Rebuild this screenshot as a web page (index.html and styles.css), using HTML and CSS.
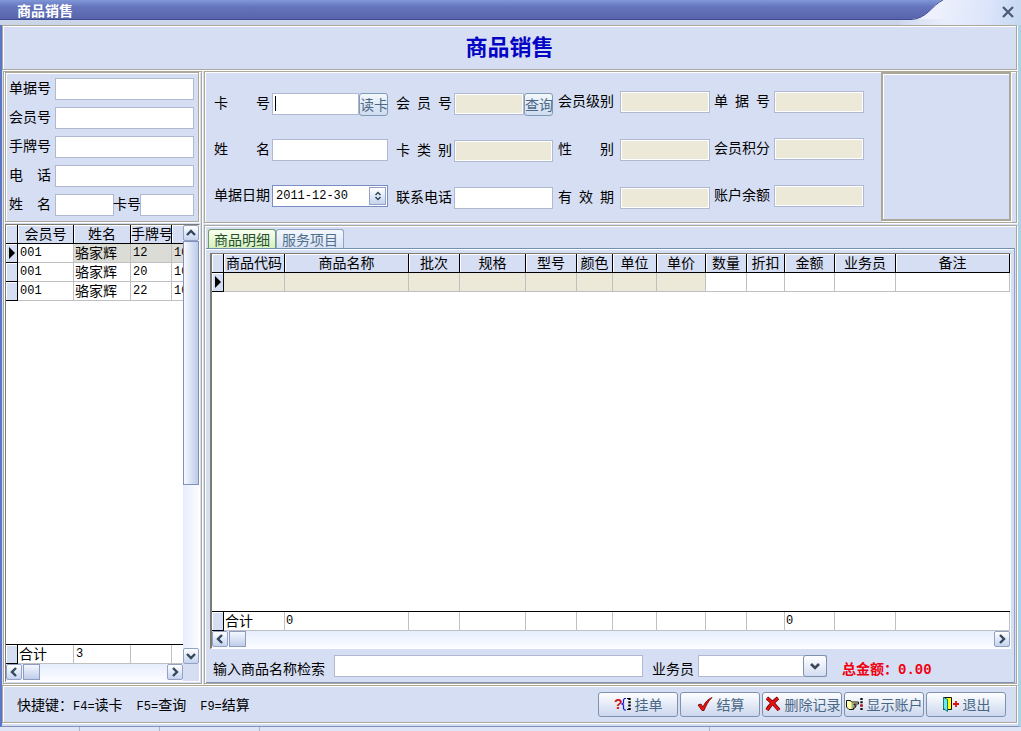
FILE: index.html
```
<!DOCTYPE html>
<html lang="zh-CN">
<head>
<meta charset="utf-8">
<title>商品销售</title>
<link rel="stylesheet" href="styles.css">
</head>
<body>
<svg class="defs" aria-hidden="true">
  <symbol id="arrow-left" viewBox="0 0 10 10"><path d="M7 1 3 5l4 4" fill="none" stroke="#33475f" stroke-width="2.4"/></symbol>
  <symbol id="arrow-right" viewBox="0 0 10 10"><path d="M3 1l4 4-4 4" fill="none" stroke="#33475f" stroke-width="2.4"/></symbol>
  <symbol id="arrow-up" viewBox="0 0 10 10"><path d="M1 7l4-4 4 4" fill="none" stroke="#33475f" stroke-width="2.4"/></symbol>
  <symbol id="arrow-down" viewBox="0 0 10 10"><path d="M1 3l4 4 4-4" fill="none" stroke="#33475f" stroke-width="2.4"/></symbol>
</svg>
<div class="window">
  <header class="titlebar">
    <div class="title-band">商品销售</div>
    <div class="title-corner">
      <svg class="corner-curve" viewBox="0 0 50 25" aria-hidden="true">
        <defs>
          <linearGradient id="band" x1="0" y1="0" x2="0" y2="1"><stop offset="0" stop-color="#7f97d8"/><stop offset=".35" stop-color="#6575bd"/><stop offset="1" stop-color="#5864ac"/></linearGradient>
          <linearGradient id="under" x1="0" y1="0" x2="1" y2="0"><stop offset="0" stop-color="#cfd9ee"/><stop offset="1" stop-color="#cfd9ee" stop-opacity="0"/></linearGradient>
        </defs>
        <path d="M0 19h50v6H0z" fill="url(#under)"/>
        <path d="M0 0h42C32 5 27 19 11 19H0z" fill="url(#band)"/>
        <path d="M0 19.5h11C27 19 32 5 43 0" fill="none" stroke="#3d4a92" stroke-width="1"/>
      </svg>
      <button class="close" aria-label="关闭"><svg width="12" height="12" viewBox="0 0 12 12"><path d="M1 1l10 10M11 1 1 11" stroke="#4c5a75" stroke-width="2.2"/></svg></button>
    </div>
  </header>
  <div class="body">
    <h1 class="banner etched">商品销售</h1>
    <main class="main">
      <aside class="side etched">
        <form class="lookup etched">
          <div class="line"><label for="q1">单据号</label><input id="q1" class="box"></div>
          <div class="line"><label for="q2">会员号</label><input id="q2" class="box"></div>
          <div class="line"><label for="q3">手牌号</label><input id="q3" class="box"></div>
          <div class="line"><label for="q4">电话</label><input id="q4" class="box"></div>
          <div class="line"><label for="q5">姓名</label><input id="q5" class="box name"><label class="short" for="q6">卡号</label><input id="q6" class="box"></div>
        </form>
        <div class="grid side-grid">
          <div class="rows">
            <table class="members">
              <colgroup><col class="w12"><col class="w56"><col class="w57"><col class="w41"><col class="w60"></colgroup>
              <thead><tr><th></th><th>会员号</th><th>姓名</th><th>手牌号</th><th></th></tr></thead>
              <tbody>
                <tr class="current"><th><i class="marker"></i></th><td class="plain num">001</td><td>骆家辉</td><td class="num">12</td><td class="num">10</td></tr>
                <tr><th></th><td class="num">001</td><td>骆家辉</td><td class="num">20</td><td class="num">10</td></tr>
                <tr><th></th><td class="num">001</td><td>骆家辉</td><td class="num">22</td><td class="num">10</td></tr>
              </tbody>
            </table>
          </div>
          <div class="totals">
            <table class="members">
              <colgroup><col class="w12"><col class="w56"><col class="w57"><col class="w41"><col class="w60"></colgroup>
              <tbody><tr><th></th><td>合计</td><td class="num">3</td><td></td><td></td></tr></tbody>
            </table>
          </div>
          <div class="vscroll">
            <button class="sb" aria-label="向上"><svg width="10" height="10"><use href="#arrow-up"/></svg></button>
            <div class="vtrack"><div class="vthumb"></div></div>
            <button class="sb" aria-label="向下"><svg width="10" height="10"><use href="#arrow-down"/></svg></button>
          </div>
          <div class="hscroll">
            <button class="sb" aria-label="向左"><svg width="10" height="10"><use href="#arrow-left"/></svg></button>
            <div class="hthumb"></div>
            <button class="sb end" aria-label="向右"><svg width="10" height="10"><use href="#arrow-right"/></svg></button>
          </div>
        </div>
      </aside>
      <section class="content">
        <form class="info etched">
          <div class="fields f1">
            <div class="line"><label for="a1">卡号</label><input id="a1" class="box caret"><button type="button" class="mini">读卡</button></div>
            <div class="line"><label for="a2">姓名</label><input id="a2" class="box"></div>
            <div class="line"><label for="a3">单据日期</label><div class="date"><input id="a3" value="2011-12-30"><button type="button" class="spin" aria-label="调整日期"><svg width="8" height="10" viewBox="0 0 8 10"><path d="M1.5 4 4 1.5 6.5 4M1.5 6 4 8.5 6.5 6" fill="none" stroke="#33475f" stroke-width="1.5"/></svg></button></div></div>
          </div>
          <div class="fields f2">
            <div class="line"><label for="b1">会员号</label><input id="b1" class="box off" readonly><button type="button" class="mini">查询</button></div>
            <div class="line"><label for="b2">卡类别</label><input id="b2" class="box off" readonly></div>
            <div class="line"><label for="b3">联系电话</label><input id="b3" class="box"></div>
          </div>
          <div class="fields f3">
            <div class="line"><label for="c1">会员级别</label><input id="c1" class="box off" readonly></div>
            <div class="line"><label for="c2">性别</label><input id="c2" class="box off" readonly></div>
            <div class="line"><label for="c3">有效期</label><input id="c3" class="box off" readonly></div>
          </div>
          <div class="fields f4">
            <div class="line"><label for="d1">单据号</label><input id="d1" class="box off" readonly></div>
            <div class="line"><label for="d2">会员积分</label><input id="d2" class="box off" readonly></div>
            <div class="line"><label for="d3">账户余额</label><input id="d3" class="box off" readonly></div>
          </div>
          <div class="photo"></div>
        </form>
        <section class="detail etched">
          <div class="tabs"><button class="tab active">商品明细</button><button class="tab">服务项目</button></div>
          <div class="sheet">
            <div class="grid">
              <div class="rows">
                <table class="goods">
                  <colgroup><col class="w12"><col class="w61"><col class="w124"><col class="w51"><col class="w66"><col class="w51"><col class="w36"><col class="w44"><col class="w49"><col class="w41"><col class="w38"><col class="w50"><col class="w61"><col></colgroup>
                  <thead><tr><th></th><th>商品代码</th><th>商品名称</th><th>批次</th><th>规格</th><th>型号</th><th>颜色</th><th>单位</th><th>单价</th><th>数量</th><th>折扣</th><th>金额</th><th>业务员</th><th>备注</th></tr></thead>
                  <tbody><tr><th><i class="marker"></i></th><td class="locked"></td><td class="locked"></td><td class="locked"></td><td class="locked"></td><td class="locked"></td><td class="locked"></td><td class="locked"></td><td class="locked"></td><td></td><td></td><td></td><td></td><td></td></tr></tbody>
                </table>
              </div>
              <div class="totals">
                <table class="goods">
                  <colgroup><col class="w12"><col class="w61"><col class="w124"><col class="w51"><col class="w66"><col class="w51"><col class="w36"><col class="w44"><col class="w49"><col class="w41"><col class="w38"><col class="w50"><col class="w61"><col></colgroup>
                  <tbody><tr><th></th><td>合计</td><td class="num">0</td><td></td><td></td><td></td><td></td><td></td><td></td><td></td><td></td><td class="num">0</td><td></td><td></td></tr></tbody>
                </table>
              </div>
              <div class="hscroll">
                <button class="sb" aria-label="向左"><svg width="10" height="10"><use href="#arrow-left"/></svg></button>
                <div class="hthumb"></div>
                <button class="sb end" aria-label="向右"><svg width="10" height="10"><use href="#arrow-right"/></svg></button>
              </div>
            </div>
            <div class="search">
              <label for="s1">输入商品名称检索</label><input id="s1" class="box find">
              <label for="s2">业务员</label>
              <div class="combo"><select id="s2" class="box"><option></option></select><span class="drop"><svg width="10" height="10" viewBox="0 0 10 10"><path d="M1 3l4 4 4-4" fill="none" stroke="#3d4658" stroke-width="2.6"/></svg></span></div>
              <strong class="sum">总金额：<span>0.00</span></strong>
            </div>
          </div>
        </section>
      </section>
    </main>
    <footer class="footer etched">
      <p class="keys"><span>快捷键：</span><span><b>F4=</b>读卡</span><span><b>F5=</b>查询</span><span><b>F9=</b>结算</span></p>
      <div class="actions">
        <button class="action"><svg width="18" height="16" viewBox="0 0 18 16"><text x="0" y="13" class="q">?</text><path d="M12 2.5h-1.5L9.5 4v3L8 8l1.5 1v3.5l1 1.5H12" fill="none" stroke="#1a1ad0" stroke-width="1.2"/><path d="M13 2.5h3M13 13.5h3" stroke="#000"/><path d="M15.5 2v12" stroke="#000" stroke-width="2.4" stroke-dasharray="2 1.3"/></svg>挂单</button>
        <button class="action"><svg width="18" height="16" viewBox="0 0 18 16"><path d="M2 9l3-1 2 3c2-5 5-8 9-9.5C12 5 10 10 8 14.5H6z" fill="#f01010" stroke="#600" stroke-width=".8"/></svg>结算</button>
        <button class="action"><svg width="18" height="16" viewBox="0 0 18 16"><path d="M3 2c4 3 8 7 12 12M14 2C10 5 6 9 3 14" fill="none" stroke="#500" stroke-width="3.6"/><path d="M3 2c4 3 8 7 12 12M14 2C10 5 6 9 3 14" fill="none" stroke="#e81010" stroke-width="2.4"/></svg>删除记录</button>
        <button class="action"><svg width="18" height="16" viewBox="0 0 18 16"><path d="M.5 4.5h4l1 1.500h7v2H8v1h2v1.500H9V12H7.500v1.500H3L.5 11z" fill="#ffffa8" stroke="#111"/><path d="M5.5 8h3M5.5 10h3.5M5.5 12H8" stroke="#333" stroke-width=".8"/><path d="M15.5 2v12" stroke="#111" stroke-width="2.4" stroke-dasharray="2 1.3"/><path d="M15.5 8.6v2" stroke="#e01010" stroke-width="2.4"/></svg>显示账户</button>
        <button class="action"><svg width="18" height="16" viewBox="0 0 18 16"><path d="M1.5 1.5h8v12h-8z" fill="#ff0" stroke="#111"/><path d="M1.500 1.500l4 2v12l-4-3z" fill="#6fe8e8" stroke="#157a7a"/><path d="M11 8h6M14 5v6" stroke="#e01010" stroke-width="1.8"/></svg>退出</button>
      </div>
    </footer>
  </div>
  <div class="status"><span></span><span></span><span class="c"></span><span class="d"></span></div>
</div>
</body>
</html>
```
FILE: styles.css
```
* { box-sizing: border-box; }
body {
  margin: 0;
  font: 14px/18px "Noto Sans CJK SC", sans-serif;
  color: #000;
  background: #d6def3;
}
button, input, select { font: inherit; color: inherit; margin: 0; padding: 0; border-radius: 0; }
button { cursor: pointer; white-space: nowrap; }
svg { display: block; flex: none; }
.defs { display: none; }

.window { min-height: 100vh; display: flex; flex-direction: column; }

/* Title bar */
.titlebar { display: flex; height: 25px; background: linear-gradient(#c3cdf0, #d2dbf0 60%, #c9d3e6); }
.title-band {
  flex: 1;
  height: 20px;
  padding: 1px 0 0 17px;
  color: #fff;
  font-weight: 700;
  background: linear-gradient(#7f97d8, #6575bd 35%, #5864ac);
  border-bottom: 1px solid #3d4a92;
}
.title-corner { display: flex; justify-content: space-between; width: 121px; background: linear-gradient(100deg, #eef1fd 30%, #dde5fb 70%, #c4d8f0); }
.corner-curve { width: 50px; height: 25px; }
.close { display: flex; align-items: center; justify-content: center; width: 27px; height: 23px; border: 0; background: none; }

.body {
  flex: 1;
  display: flex;
  flex-direction: column;
  gap: 1px;
  border-left: 2px solid #5a76c8;
  border-right: 3px solid #a9d3e8;
  padding-right: 1px;
  padding-bottom: 3px;
  background: #d6def3;
  border-bottom: 1px solid #8390b8;
}
.etched { border: 1px solid #aca899; box-shadow: inset 1px 1px #fff, 1px 1px #fff; }

.banner {
  margin: 0;
  padding: 4px 0 9px;
  font-size: 22px;
  line-height: 30px;
  text-align: center;
  color: #0404c4;
}

.main { flex: 1; display: flex; gap: 2px; }

/* Form pieces */
.line { display: flex; align-items: center; height: 22px; }
label { text-align: justify; text-align-last: justify; white-space: nowrap; }
.line label { padding-bottom: 4px; }
.box { flex: 1; min-width: 0; height: 22px; border: 1px solid #afb9d1; background: #fff; outline: 0; }
.off { background: #ece9d8; box-shadow: inset 0 0 0 1px #fff; }
.caret { background: linear-gradient(#000, #000) 2px 2px / 1px 15px no-repeat #fff; }
.num { font-family: "Liberation Mono", monospace; font-size: 12px; }

/* Left column */
.side { width: 199px; margin-left: 1px; padding: 0 1px 1px; display: flex; flex-direction: column; gap: 2px; }
.lookup { display: flex; flex-direction: column; gap: 7px; padding: 5px 4px 5px 3px; margin-right: 1px; }
.lookup label { width: 42px; margin-right: 4px; }
.lookup .short { width: 26px; margin: 0; text-align-last: left; text-indent: -1px; }
.lookup .name { flex: none; width: 59px; }

/* Data grids */
.grid {
  flex: 1;
  display: grid;
  grid-template-columns: minmax(0, 1fr) auto;
  grid-template-rows: minmax(0, 1fr) 20px 17px;
  border: 1px solid #7d7b70;
  border-right-color: #fff;
  border-bottom-color: #fff;
}
.rows { overflow: hidden; background: #fff; grid-column: 1; }
.totals { overflow: hidden; background: #fff; border-top: 1px solid #000; grid-column: 1; }
table { width: 100%; table-layout: fixed; border-collapse: separate; border-spacing: 0; }
.members { width: 226px; }
th, td { height: 19px; padding: 0 0 1px; line-height: 17px; font-weight: 400; white-space: nowrap; border-right: 1px solid #c0c0c0; border-bottom: 1px solid #c0c0c0; }
td { padding-left: 1px; text-align: left; }
th { background: #d6def3; border-color: #000; box-shadow: inset 1px 1px #fff; }
th:first-child { text-align: center; }
td.num { padding-bottom: 0; }
.members .num { padding-left: 2px; }
.current td { background: #dcdcd6; }
.current .plain { background: #fff; }
.locked { background: #ece9d8; }
.marker { display: block; width: 0; height: 0; margin-left: 3px; border: 6px solid transparent; border-left-color: #000; border-right: 0; }
.w12 { width: 12px; }
.w36 { width: 36px; }
.w38 { width: 38px; }
.w41 { width: 41px; }
.w44 { width: 44px; }
.w49 { width: 49px; }
.w50 { width: 50px; }
.w51 { width: 51px; }
.w56 { width: 56px; }
.w57 { width: 57px; }
.w60 { width: 60px; }
.w61 { width: 61px; }
.w66 { width: 66px; }
.w124 { width: 124px; }

/* Scroll bars */
.sb {
  display: flex;
  align-items: center;
  justify-content: center;
  flex: none;
  width: 16px;
  height: 16px;
  border: 1px solid #93a1c5;
  border-radius: 2px;
  background: linear-gradient(#fff, #c5d3ee);
}
.vscroll { grid-column: 2; grid-row: 1 / 3; width: 16px; display: flex; flex-direction: column; background: linear-gradient(90deg, #e6edfd, #fbfcff); }
.vtrack { flex: 1; }
.vthumb { height: 60%; border: 1px solid #8291bb; background: linear-gradient(90deg, #f6f9ff, #bccbea); }
.hscroll { grid-column: 1; display: flex; background: linear-gradient(#e6edfd, #fbfcff); }
.hthumb { width: 17px; height: 16px; margin-left: 1px; border: 1px solid #8e9cc2; background: linear-gradient(#f4f7ff, #c0cde9); }
.end { margin-left: auto; }

/* Member info */
.content { flex: 1; min-width: 0; display: flex; flex-direction: column; gap: 2px; }
.info { display: flex; padding-left: 9px; height: 152px; }
.fields { display: flex; flex-direction: column; }
.fields label { width: 56px; flex: none; }
.f1 { width: 174px; gap: 24px; padding-top: 21px; }
.f1 label { margin-right: 2px; }
.f2 { width: 157px; gap: 25px; padding-top: 21px; margin-left: 8px; }
.f2 label { margin-right: 2px; }
.f3 { width: 152px; gap: 26px; padding-top: 19px; margin-left: 5px; }
.f3 label { margin-right: 6px; }
.f4 { width: 150px; gap: 25px; padding-top: 19px; margin-left: 4px; }
.f4 label { margin-right: 4px; }
.mini {
  width: 29px;
  height: 23px;
  line-height: 19px;
  border: 1px solid #7e9cb4;
  border-radius: 3px;
  background: linear-gradient(#f3f8fc, #cfdcf0);
  color: #4a6785;
}
.date { display: flex; flex: 1; min-width: 0; height: 22px; padding: 1px; border: 1px solid #7a8cc4; background: #fff; }
.date input { flex: 1; min-width: 0; border: 0; padding-left: 2px; outline: 0; background: none; font: 12px "Liberation Mono", monospace; }
.spin { display: flex; align-items: center; justify-content: center; width: 17px; border: 1px solid #93a1c5; background: linear-gradient(#fff, #c5d3ee); }
.photo { width: 130px; margin: 0 5px 1px auto; border: 2px solid #aca899; box-shadow: inset 1px 1px #fff, 1px 1px #fff; }

/* Detail panel */
.detail { flex: 1; display: flex; flex-direction: column; padding: 3px 1px 0; }
.tabs { display: flex; padding-left: 2px; }
.tab { width: 68px; height: 19px; line-height: 16px; padding-bottom: 1px; border: 1px solid #8fa5c4; border-bottom: 0; border-radius: 3px 3px 0 0; background: linear-gradient(#f4f7fd, #d9e2f5); color: #4f708c; }
.active { background: linear-gradient(#fbfff0, #d5f0c0); border-color: #6f9a70; color: #24502c; }
.sheet { flex: 1; display: flex; flex-direction: column; border-top: 1px solid #7090b0; border-right: 1px solid #93a1c5; border-bottom: 1px solid #8390b8; padding: 4px 3px 0 4px; box-shadow: inset 0 1px #fff; }
.sheet .grid { border-left-width: 2px; }
.search { display: flex; align-items: center; height: 33px; padding-left: 3px; }
.search label { text-align-last: left; padding-top: 4px; }
.find { flex: 0 1 309px; margin: 0 9px; }
.combo { position: relative; display: flex; flex: 0 1 129px; margin-left: 4px; }
.combo select { appearance: none; }
.drop {
  position: absolute;
  top: 0;
  right: 0;
  display: flex;
  align-items: center;
  justify-content: center;
  width: 24px;
  height: 22px;
  border: 1px solid #7f90ad;
  border-radius: 3px;
  background: linear-gradient(#fff, #d3ddf2);
  pointer-events: none;
}
.sum { margin-left: 15px; padding-top: 5px; font-size: 14px; color: #f00010; white-space: nowrap; }
.sum span { font: 700 14px "Liberation Mono", monospace; }

/* Footer */
.footer { display: flex; align-items: center; justify-content: space-between; height: 38px; padding: 0 10px 0 14px; }
.keys { display: flex; gap: 14px; margin: 0; }
.keys span:first-child { margin-right: -14px; }
.keys b { font: 12px "Liberation Mono", monospace; }
.actions { display: flex; gap: 2px; }
.action {
  display: flex;
  align-items: center;
  justify-content: center;
  gap: 3px;
  width: 80px;
  height: 25px;
  padding-bottom: 1px;
  border: 1px solid #7f92ad;
  border-radius: 3px;
  background: linear-gradient(#fdfeff, #ccd7ee);
  color: #4a6785;
}
.q { font: 700 14px "Liberation Sans", sans-serif; fill: #d01010; }

.status { display: flex; height: 4px; background: #dde5f6; }
.status span { width: 80px; border-right: 1px solid #aab4cc; }
.status .c { width: 100px; }
.status .d { width: 450px; }
```
